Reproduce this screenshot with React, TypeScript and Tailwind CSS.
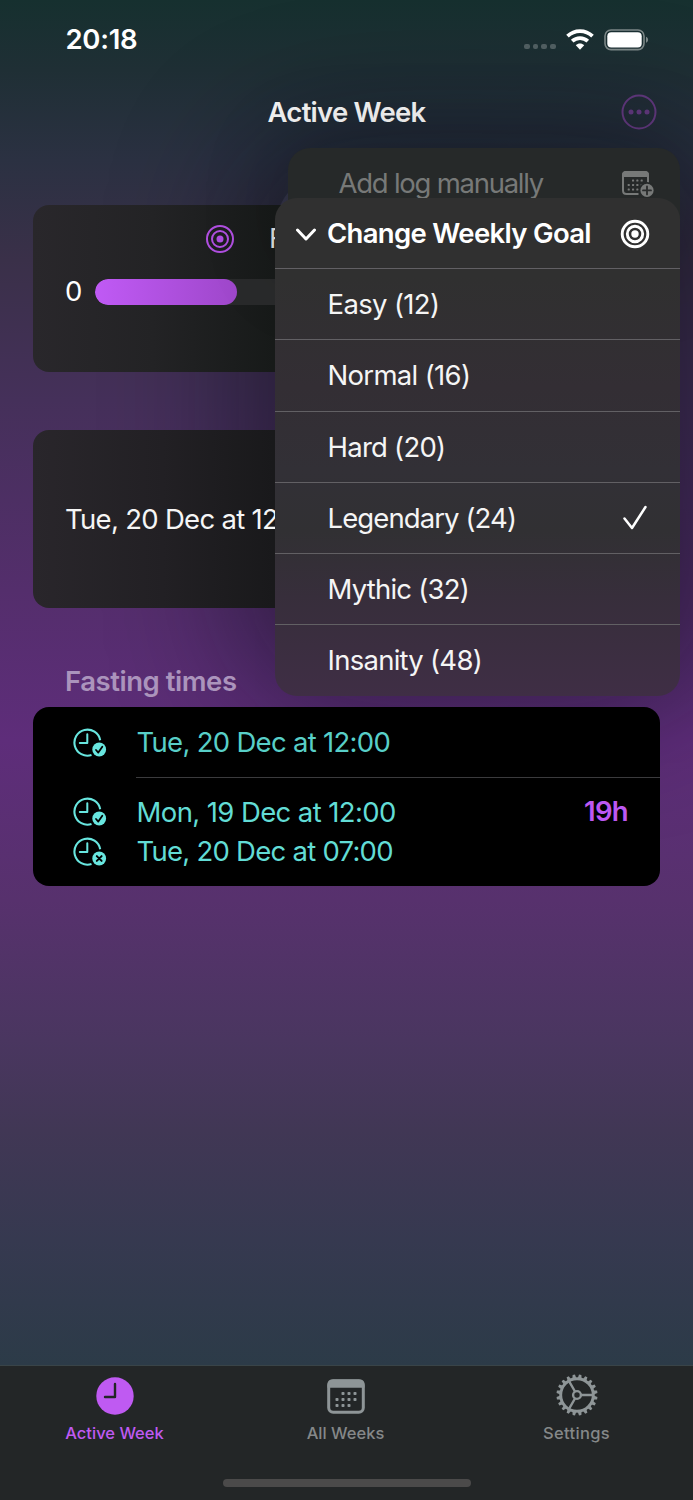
import React from "react";

type IconProps = { className?: string };

function Wifi() {
  return (
    <svg width="28" height="22" viewBox="0 0 28 22" fill="none" stroke="white" strokeWidth="3.7">
      <path d="M1.5 7.200 C8.500 .4 19.500 .4 26.500 7.200" />
      <path d="M6.200 12.200 C10.600 8 17.400 8 21.800 12.200" />
      <path d="M9.800 16.200 C12.200 14 15.800 14 18.200 16.200 L14 20.700Z" fill="white" stroke="none" />
    </svg>
  );
}

function Battery() {
  return (
    <svg width="45" height="22" viewBox="0 0 45 22" fill="none">
      <rect x="1" y="1" width="39" height="19.600" rx="6" stroke="#7b8686" strokeWidth="1.600" />
      <rect x="3.300" y="3.200" width="34.400" height="15.200" rx="4" fill="white" />
      <path d="M42 7.800 C44.800 8.500 44.800 13.100 42 13.800Z" fill="#7b8686" />
    </svg>
  );
}

function Target({ className, bold = false }: IconProps & { bold?: boolean }) {
  return (
    <svg className={className} width="30" height="30" viewBox="0 0 30 30" fill="none" stroke="currentColor" strokeWidth={bold ? 2.9 : 2}>
      <circle cx="15" cy="15" r={bold ? 12.8 : 13} />
      <circle cx="15" cy="15" r={bold ? 7.7 : 8} />
      <circle cx="15" cy="15" r={bold ? 3.7 : 3.5} fill="currentColor" stroke="none" />
    </svg>
  );
}

const dotRows = [
  [0, 12.5, 18.5, 24.5],
  [6.5, 12.5, 18.5, 24.5],
  [6.5, 12.5, 18.5, 0],
];

function Calendar() {
  return (
    <svg width="38" height="35" viewBox="0 0 38 35" fill="none">
      <rect x="1.700" y="1.700" width="34.600" height="31.600" rx="4.500" stroke="currentColor" strokeWidth="3" />
      <path d="M.5 8V5.500Q.5 .5 5.500 .5H32.500Q37.500 .5 37.500 5.500V8.700H.5Z" fill="currentColor" />
      <g fill="currentColor">
        {dotRows.map((row, r) =>
          row.map((x, c) => (x ? <rect key={`${r}-${c}`} x={x + 2} y={13 + r * 6} width="3" height="3" rx=".8" /> : null)),
        )}
      </g>
    </svg>
  );
}

function CalendarPlus() {
  return (
    <svg width="34" height="28" viewBox="0 0 34 28" fill="none">
      <path d="M27 15V5.500Q27 2 23.500 2H5.500Q2 2 2 5.500V20.500Q2 24 5.500 24H17.500" stroke="#777978" strokeWidth="2" />
      <path d="M1 7V5Q1 1 5 1H24Q28 1 28 5V7Z" fill="#777978" />
      <g fill="#777978">
        {dotRows.map((row, r) =>
          row.map((x, c) => (x ? <rect key={`${r}-${c}`} x={x * 0.72 + 2} y={9.5 + r * 4.5} width="2.100" height="2.100" rx=".6" /> : null)),
        )}
      </g>
      <circle cx="26" cy="20.400" r="8.300" fill="#262929" />
      <circle cx="26" cy="20.400" r="6.600" fill="#777978" />
      <path d="M26 16.400V24.400M22 20.400H30" stroke="#2a2c2c" strokeWidth="1.800" strokeLinecap="round" />
    </svg>
  );
}

function ClockBadge({ done }: { done: boolean }) {
  return (
    <svg width="34" height="30" viewBox="0 0 34 30" fill="none" strokeLinecap="round" strokeLinejoin="round">
      <path d="M27.200 12.200A13 13 0 1 0 18.500 27" stroke="#68e6df" strokeWidth="2.100" strokeLinecap="butt" />
      <path d="M14.300 6.200V15H6.800" stroke="#68e6df" strokeWidth="2" />
      <circle cx="26.200" cy="21.500" r="6.900" fill="#68e6df" />
      {done ? (
        <path d="M23 22L25.300 24.600L29.300 18.700" stroke="black" strokeWidth="1.800" />
      ) : (
        <path d="M23.800 19.100L28.600 23.900M28.600 19.100L23.800 23.900" stroke="black" strokeWidth="2" />
      )}
    </svg>
  );
}

const teeth = Array.from({ length: 20 }, (_, i) => i * 18 + 9);

function Gear() {
  return (
    <svg width="42" height="42" viewBox="0 0 42 42" fill="none" stroke="currentColor">
      {teeth.map((a) => (
        <path key={a} d="M19 4.500L19.800 .5H22.200L23 4.500Z" fill="currentColor" stroke="none" transform={`rotate(${a} 21 21)`} />
      ))}
      <circle cx="21" cy="21" r="16.300" strokeWidth="2.900" />
      <circle cx="21" cy="21" r="3.900" strokeWidth="2.400" />
      <path d="M25 21H37M19 17.500L13 7.100M19 24.500L13 34.900" strokeWidth="2.400" />
    </svg>
  );
}

const goals = [
  { label: "Easy (12)", ls: "tracking-[-0.65px]" },
  { label: "Normal (16)", ls: "tracking-[-0.68px]" },
  { label: "Hard (20)", ls: "tracking-[-0.75px]" },
  { label: "Legendary (24)", ls: "tracking-[-0.9px]" },
  { label: "Mythic (32)", ls: "tracking-[-0.78px]" },
  { label: "Insanity (48)", ls: "tracking-[-0.74px]" },
];

function StatusBar() {
  return (
    <div className="flex h-[80px] items-center justify-between pl-[65.500px] pr-[44px]">
      <span className="text-[27.5px] font-semibold tracking-[-0.3px] text-white">20:18</span>
      <div className="flex items-center">
        <div className="mt-[13px] flex gap-[3px]">
          {[0, 1, 2, 3].map((i) => (
            <span key={i} className="size-[5.800px] rounded-[2px] bg-[#4f5d60]" />
          ))}
        </div>
        <div className="ml-[10px]"><Wifi /></div>
        <div className="ml-[10px]"><Battery /></div>
      </div>
    </div>
  );
}

function GoalMenu() {
  return (
    <>
      <div className="absolute left-[287.500px] top-[148px] flex h-[120px] w-[392.500px] items-start justify-between rounded-[22px] bg-[#262929] pl-[51px] pr-[25px] pt-[18px] shadow-[0_0_80px_10px_rgba(4,12,16,0.15)]">
        <span className="text-[27.5px] leading-[34px] tracking-[-1.25px] text-[#777978]">Add log manually</span>
        <div className="mt-[4px]"><CalendarPlus /></div>
      </div>
      <div className="absolute left-[275px] top-[198px] w-[405px] overflow-hidden rounded-[22px] bg-[linear-gradient(180deg,#303030_0%,#303030_16%,#332e34_38%,#323036_55%,#313033_67%,#372e3b_80%,#3f2e45_100%)] text-[#f5f5f5]">
        <div className="flex h-[70px] items-center pl-[20px] pr-[30.500px] pt-px">
          <svg width="22" height="14" viewBox="0 0 22 14" fill="none" stroke="white" strokeWidth="3" strokeLinecap="round" strokeLinejoin="round" className="mt-[3px]">
            <path d="M2.500 2L11 11L19.500 2" />
          </svg>
          <span className="ml-[10px] flex-1 whitespace-nowrap text-[27.5px] font-semibold tracking-[-0.68px] text-white">Change Weekly Goal</span>
          <Target bold className="text-white" />
        </div>
        {goals.map((g) => (
          <div key={g.label} className="flex h-[71.250px] items-center justify-between border-t border-[#626064] pl-[52.500px] pr-[32px] pt-px text-[27.5px]">
            <span className={g.ls}>{g.label}</span>
            {g.label.startsWith("Legendary") && (
              <svg width="26" height="26" viewBox="0 0 26 26" fill="none" stroke="white" strokeWidth="2.500" strokeLinecap="round" strokeLinejoin="round">
                <path d="M2.500 13.500L10 23L23.500 2" />
              </svg>
            )}
          </div>
        ))}
      </div>
    </>
  );
}

export default function App() {
  return (
    <div className="relative flex h-[1500px] w-[693px] flex-col overflow-hidden bg-[linear-gradient(180deg,#16302f_0px,#1f2f35_70px,#2b3142_160px,#3a3049_260px,#45305a_400px,#542e6c_590px,#5e2d7a_740px,#57316d_900px,#4a3660_1040px,#413755_1130px,#363950_1240px,#2c3b48_1365px)] font-[Inter,'Liberation_Sans',sans-serif]">
      <div className="absolute left-[275px] top-[170px] h-[500px] w-[405px] rounded-[60px] shadow-[0_0_130px_36px_rgba(4,8,16,0.48)]" />
      <div className="relative">
        <StatusBar />
        <header className="relative flex h-[65px] items-center justify-center">
          <h1 className="text-[27.5px] font-semibold tracking-[-0.75px] text-[#f2f2f2]">Active Week</h1>
          <svg width="36" height="36" viewBox="0 0 36 36" fill="#5d3679" className="absolute right-[36px] top-[14px]">
            <circle cx="18" cy="18" r="16.500" fill="none" stroke="#5d3679" strokeWidth="2" />
            <circle cx="10" cy="18" r="2.500" />
            <circle cx="18" cy="18" r="2.500" />
            <circle cx="26" cy="18" r="2.500" />
          </svg>
        </header>
      </div>

      <main className="relative flex flex-1 flex-col px-[33px]">
        <section className="mt-[59.500px] h-[167.500px] rounded-[16px] bg-[linear-gradient(90deg,#29272b_0px,#232325_120px,#171a19_240px)] px-[33px] pt-[18.500px]">
          <div className="flex h-[32px] items-center pl-[139px]">
            <Target className="text-[#b04fe0]" />
            <span className="ml-[34px] whitespace-nowrap text-[27.5px] text-[#dddddd]">F</span>
          </div>
          <div className="mt-[19.500px] flex h-[34px] items-center">
            <span className="-ml-px w-[30px] text-[27.5px] text-white">0</span>
            <div className="h-[26px] flex-1 overflow-hidden rounded-full bg-[#292a2b]">
              <div className="h-full w-[142px] rounded-full bg-[linear-gradient(90deg,#c05af5,#9e47ca)]" />
            </div>
          </div>
        </section>

        <section className="mt-[58px] flex h-[177.500px] items-center rounded-[16px] bg-[linear-gradient(90deg,#29262b_0px,#222024_130px,#19191b_240px)] px-[32px] pt-[2px]">
          <span className="whitespace-nowrap text-[27.5px] tracking-[-0.7px] text-[#f5f5f5]">Tue, 20 Dec at 12:00</span>
        </section>

        <h2 className="mt-[55px] h-[36px] pl-[32px] text-[27.5px] font-semibold leading-[36px] tracking-[-0.45px] text-[#ab94bc]">Fasting times</h2>

        <section className="mt-[8px] h-[179px] rounded-[16px] bg-black text-[27.5px] text-[#62dcd5]">
          <div className="flex h-[70.500px] items-center pl-[40px] pt-[2px]">
            <ClockBadge done />
            <span className="ml-[29.500px] tracking-[-0.7px] text-[#58cfc8]">Tue, 20 Dec at 12:00</span>
          </div>
          <div className="ml-[103px] h-px bg-[#3b3b3d]" />
          <div className="flex h-[107px] items-center justify-between pl-[40px] pr-[32px] pt-px">
            <div className="flex flex-col">
              <div className="flex h-[39.500px] items-center">
                <ClockBadge done />
                <span className="ml-[29.500px] tracking-[-0.6px]">Mon, 19 Dec at 12:00</span>
              </div>
              <div className="flex h-[39.500px] items-center">
                <ClockBadge done={false} />
                <span className="ml-[29.500px] tracking-[-0.74px]">Tue, 20 Dec at 07:00</span>
              </div>
            </div>
            <span className="mb-[40px] font-semibold tracking-[-0.7px] text-[#bd58f2]">19h</span>
          </div>
        </section>
      </main>

      <footer className="relative flex h-[135.500px] flex-col items-center border-t border-[#394448] bg-[#232627]">
        <nav className="-ml-[2px] grid h-[82px] w-full grid-cols-3 text-[16.500px] font-medium text-[#858889]">
          <div className="flex flex-col items-center text-[#bf5af2]">
            <div className="flex h-[58px] items-center pt-[2px]">
              <svg width="38" height="38" viewBox="0 0 38 38">
                <circle cx="19" cy="19" r="18.700" fill="#bf5af2" />
                <path d="M19 7V20H9" fill="none" stroke="#232627" strokeWidth="2.400" strokeLinecap="round" strokeLinejoin="round" />
              </svg>
            </div>
            <span className="leading-[18px] tracking-[0px]">Active Week</span>
          </div>
          <div className="flex flex-col items-center">
            <div className="flex h-[58px] items-center pt-[3px] text-[#8e9597]"><Calendar /></div>
            <span className="leading-[18px] tracking-[0px]">All Weeks</span>
          </div>
          <div className="flex flex-col items-center">
            <div className="flex h-[58px] items-center pt-px text-[#8e9597]"><Gear /></div>
            <span className="leading-[18px] tracking-[0.35px]">Settings</span>
          </div>
        </nav>
        <div className="mt-[31px] h-[8px] w-[248px] rounded-full bg-[#4b4a4a]" />
      </footer>

      <GoalMenu />
    </div>
  );
}
